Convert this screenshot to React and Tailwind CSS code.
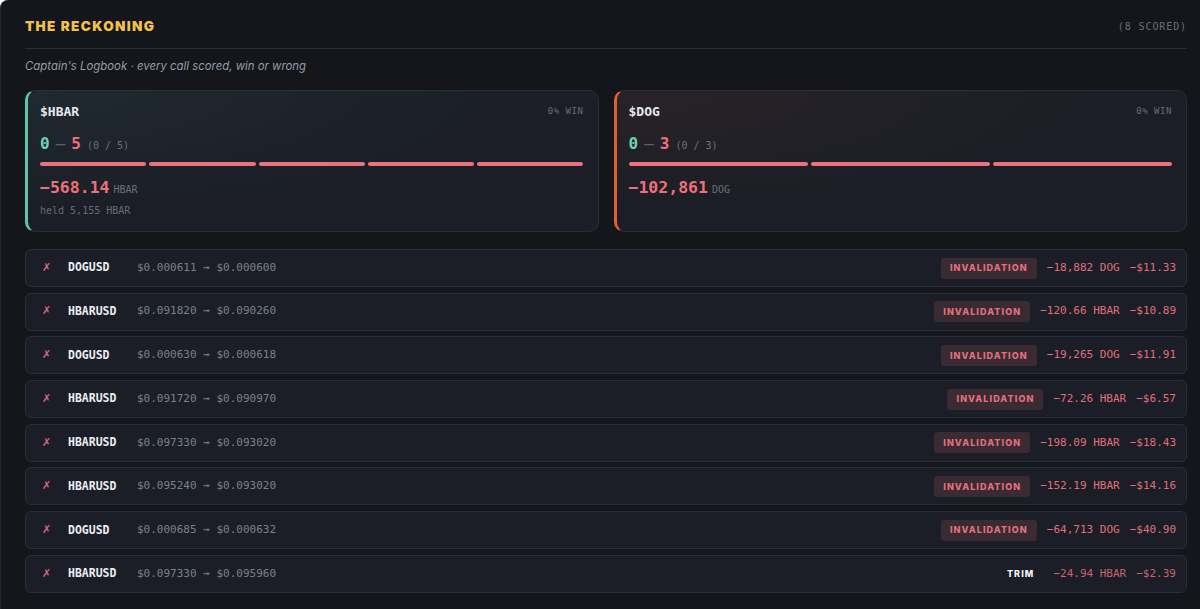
import React from 'react';

const mono = { fontFamily: '"DejaVu Sans Mono", "Liberation Mono", monospace' };

const holdings = [
  {
    ticker: '$HBAR',
    wins: 0,
    losses: 5,
    total: 5,
    pnl: '\u2212568.14',
    unit: 'HBAR',
    held: 'held 5,155 HBAR',
    edge: 'border-l-[#5fc4ab]',
    glow: 'bg-[radial-gradient(ellipse_at_top_left,rgba(95,196,171,0.07),transparent_60%)]',
  },
  {
    ticker: '$DOG',
    wins: 0,
    losses: 3,
    total: 3,
    pnl: '\u2212102,861',
    unit: 'DOG',
    held: null,
    edge: 'border-l-[#e0602f]',
    glow: 'bg-[radial-gradient(ellipse_at_top_left,rgba(224,96,64,0.07),transparent_60%)]',
  },
];

const calls = [
  { sym: 'DOGUSD', from: '$0.000611', to: '$0.000600', tag: 'INVALIDATION', qty: '\u221218,882 DOG', usd: '\u2212$11.33' },
  { sym: 'HBARUSD', from: '$0.091820', to: '$0.090260', tag: 'INVALIDATION', qty: '\u2212120.66 HBAR', usd: '\u2212$10.89' },
  { sym: 'DOGUSD', from: '$0.000630', to: '$0.000618', tag: 'INVALIDATION', qty: '\u221219,265 DOG', usd: '\u2212$11.91' },
  { sym: 'HBARUSD', from: '$0.091720', to: '$0.090970', tag: 'INVALIDATION', qty: '\u221272.26 HBAR', usd: '\u2212$6.57' },
  { sym: 'HBARUSD', from: '$0.097330', to: '$0.093020', tag: 'INVALIDATION', qty: '\u2212198.09 HBAR', usd: '\u2212$18.43' },
  { sym: 'HBARUSD', from: '$0.095240', to: '$0.093020', tag: 'INVALIDATION', qty: '\u2212152.19 HBAR', usd: '\u2212$14.16' },
  { sym: 'DOGUSD', from: '$0.000685', to: '$0.000632', tag: 'INVALIDATION', qty: '\u221264,713 DOG', usd: '\u2212$40.90' },
  { sym: 'HBARUSD', from: '$0.097330', to: '$0.095960', tag: 'TRIM', qty: '\u221224.94 HBAR', usd: '\u2212$2.39' },
];

function HoldingCard({ h }) {
  return (
    <div
      className={`relative rounded-[10px] border border-[#2a2e37] border-l-[3px] ${h.edge} bg-[#1b1e26] pl-3 pr-[14px] pt-[13px] pb-[13px]`}
    >
      <div className={`pointer-events-none absolute inset-0 rounded-[10px] ${h.glow}`} />
      <div className="relative flex flex-col">
        <div className="flex h-4 items-center justify-between">
          <span style={mono} className="text-[13px] font-bold text-[#e6e8ec]">{h.ticker}</span>
          <span style={mono} className="text-[9px] tracking-[0.06em] text-[#666b74]">0% WIN</span>
        </div>
        <div style={mono} className="mt-3 flex h-5 items-baseline gap-[6px]">
          <span className="text-[16px] font-bold text-[#6fd1b6]">{h.wins}</span>
          <span className="text-[16px] text-[#5b6069]">—</span>
          <span className="text-[16px] font-bold text-[#ee6f7c]">{h.losses}</span>
          <span className="text-[10px] text-[#6b7079]">({h.wins} / {h.total})</span>
        </div>
        <div className="mt-[10px] flex gap-[3px]">
          {Array.from({ length: h.total }).map((_, i) => (
            <div key={i} className="h-[4px] flex-1 rounded-full bg-[#e9727e]" />
          ))}
        </div>
        <div style={mono} className="mt-[10px] flex h-5 items-baseline gap-1">
          <span className="text-[16.5px] font-bold text-[#ee6f7c]">{h.pnl}</span>
          <span className="text-[10px] text-[#6b7079]">{h.unit}</span>
        </div>
        {h.held && (
          <div style={mono} className="mt-2 h-[14px] text-[10px] leading-[14px] text-[#666b74]">
            {h.held}
          </div>
        )}
      </div>
    </div>
  );
}

function CallRow({ c }) {
  const trim = c.tag === 'TRIM';
  return (
    <div className="flex h-[38px] items-center rounded-[6px] border border-[#2a2e37] bg-[#1b1e26] pl-4 pr-[10px]">
      <span className="w-[26px] text-[11px] text-[#d9667a]" style={{ fontFamily: '"DejaVu Sans", sans-serif' }}>
        ✗
      </span>
      <span style={mono} className="w-[69px] text-[11.5px] font-bold text-[#eceef2]">{c.sym}</span>
      <span style={mono} className="text-[11px] text-[#7b808a]">
        {c.from} → {c.to}
      </span>
      <div className="ml-auto flex items-center gap-[10px]">
        <span
          className={`flex h-[21px] items-center rounded-[3px] px-[9px] text-[9px] font-extrabold tracking-[0.12em] ${
            trim ? 'text-[#f1f2f4]' : 'bg-[#3a2a32] text-[#e2707e]'
          }`}
          style={{ fontFamily: 'Inter, sans-serif' }}
        >
          {c.tag}
        </span>
        <div style={mono} className={`flex gap-[10px] text-[11px] ${trim ? 'text-[#c9636f]' : 'text-[#e06f7c]'}`}>
          <span>{c.qty}</span>
          <span>{c.usd}</span>
        </div>
      </div>
    </div>
  );
}

export default function App() {
  return (
    <div className="min-h-screen rounded-tl-[8px] border-l border-[#252830] bg-[#14161c] pl-6 pr-[13px] pt-4 pb-4">
      {/* header */}
      <div className="flex items-center justify-between border-b border-[#2a2d35] pb-3">
        <h1
          className="text-[13.5px] font-black leading-5 tracking-[0.1em] text-[#f2c14e]"
          style={{ fontFamily: 'Inter, sans-serif' }}
        >
          THE RECKONING
        </h1>
        <span style={mono} className="text-[10px] tracking-[0.09em] text-[#6b7079]">(8 SCORED)</span>
      </div>
      <p className="mt-[9px] text-[11.4px] italic leading-4 text-[#979ca6]" style={{ fontFamily: 'Inter, sans-serif' }}>
        Captain's Logbook · every call scored, win or wrong
      </p>

      {/* per-asset summary */}
      <div className="mt-4 grid grid-cols-2 gap-[15px]">
        {holdings.map((h) => (
          <HoldingCard key={h.ticker} h={h} />
        ))}
      </div>

      {/* scored calls */}
      <div className="mt-[17px] flex flex-col gap-[5.7px]">
        {calls.map((c, i) => (
          <CallRow key={i} c={c} />
        ))}
      </div>
    </div>
  );
}
